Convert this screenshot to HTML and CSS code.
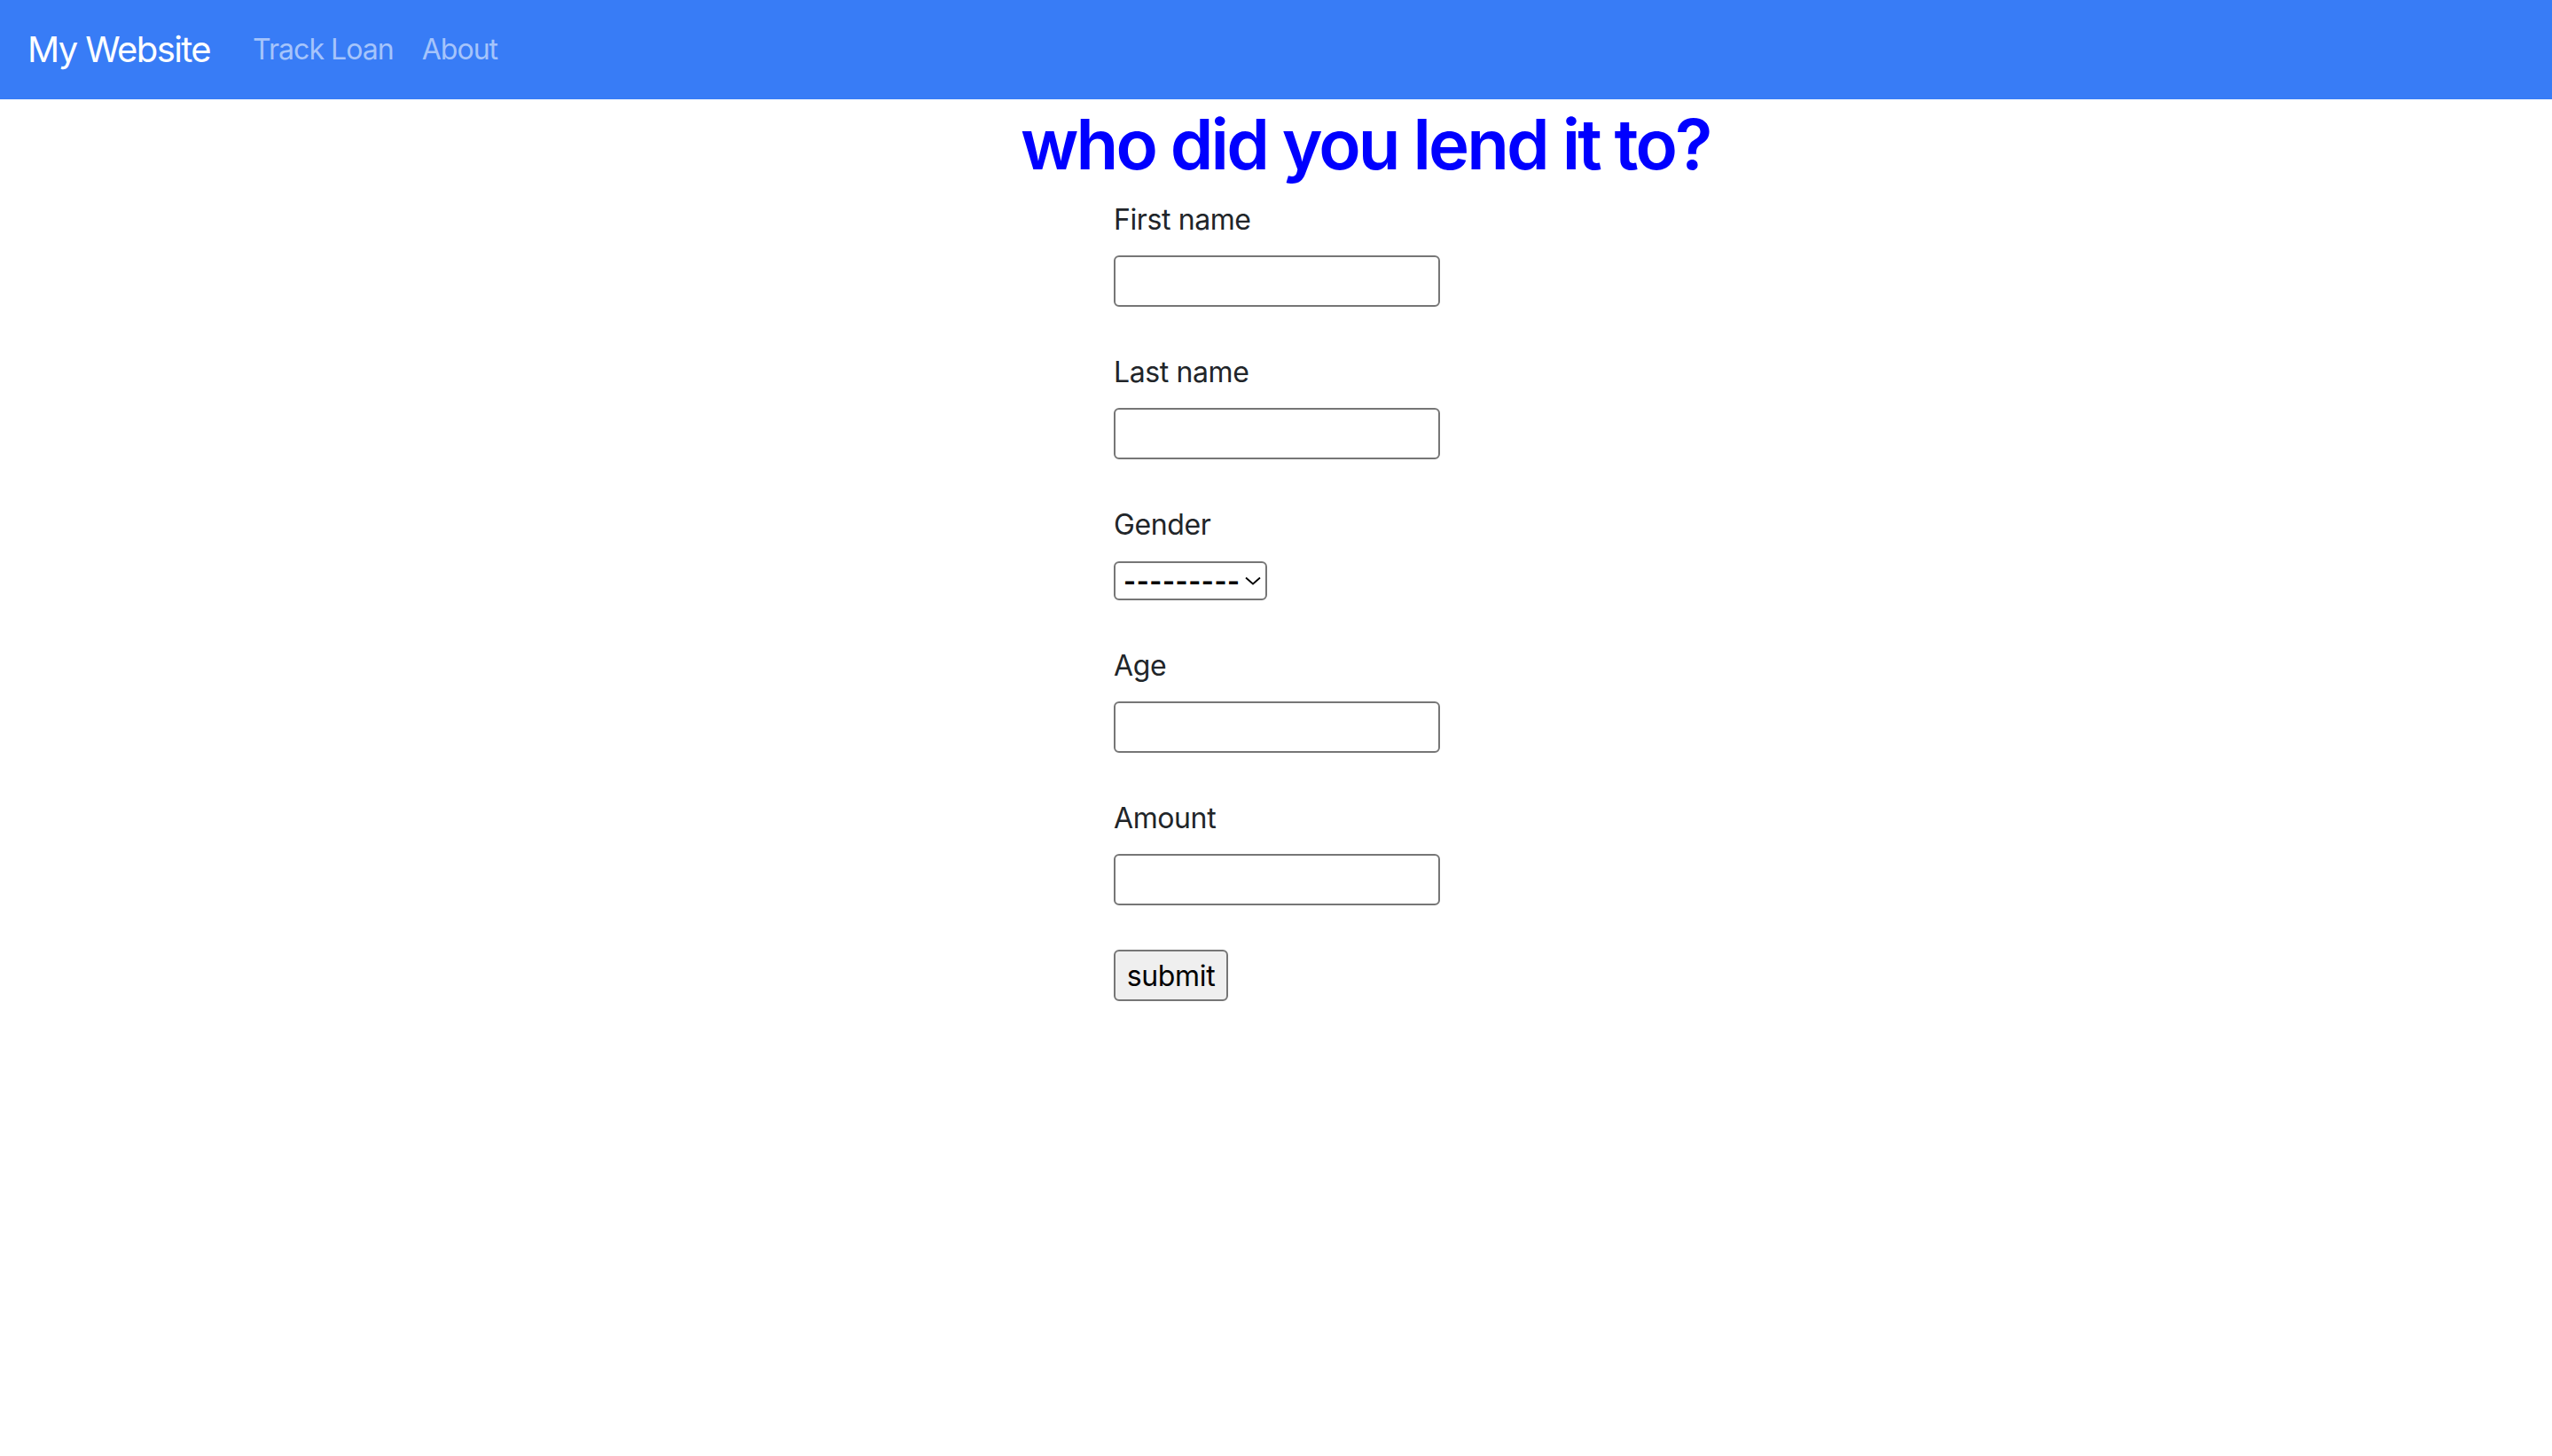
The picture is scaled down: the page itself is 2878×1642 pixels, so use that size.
FILE: index.html
```html
<!DOCTYPE html>
<html lang="en">
<head>
<meta charset="utf-8">
<title>My Website</title>
<link rel="stylesheet" href="styles.css">
</head>
<body>
<nav class="navbar">
  <a class="brand" href="#">My Website</a>
  <ul class="nav-links">
    <li><a class="nav-link" href="#">Track Loan</a></li>
    <li><a class="nav-link" href="#">About</a></li>
  </ul>
</nav>
<main class="page">
  <h1 class="title">who did you lend it to?</h1>
  <form class="loan-form">
    <div class="field">
      <label for="first">First name</label>
      <input id="first" type="text" class="text-input">
    </div>
    <div class="field">
      <label for="last">Last name</label>
      <input id="last" type="text" class="text-input">
    </div>
    <div class="field field-select">
      <label for="gender">Gender</label>
      <div class="select-wrap">
        <select id="gender" class="select-input">
          <option>---------</option>
          <option>Male</option>
          <option>Female</option>
        </select>
        <svg class="chevron" width="18" height="10" viewBox="0 0 18 10"><path d="M1 1.5 L9 8.5 L17 1.5" fill="none" stroke="#000" stroke-width="1.8"/></svg>
      </div>
    </div>
    <div class="field">
      <label for="age">Age</label>
      <input id="age" type="text" class="text-input">
    </div>
    <div class="field">
      <label for="amount">Amount</label>
      <input id="amount" type="text" class="text-input">
    </div>
    <button type="submit" class="submit-btn">submit</button>
  </form>
</main>
</body>
</html>
```
FILE: styles.css
```css
* { box-sizing: border-box; }
html, body { margin: 0; padding: 0; background: #fff; }
body {
  font-family: Inter, "Noto Sans", "Liberation Sans", sans-serif;
  color: #212529;
  letter-spacing: -0.025em;
}
.navbar {
  display: flex;
  align-items: center;
  height: 112px;
  padding-left: 31px;
  background: #387cf6;
}
.brand {
  font-size: 40px;
  line-height: 60px;
  letter-spacing: -0.04em;
  color: #fff;
  text-decoration: none;
  margin-right: 32px;
}
.nav-links {
  display: flex;
  list-style: none;
  margin: 0;
  padding: 0;
}
.nav-link {
  display: block;
  padding: 16px;
  font-size: 32px;
  line-height: 48px;
  letter-spacing: -0.03em;
  color: #a5c4fb;
  text-decoration: none;
}
.page {
  padding-left: 1151px;
}
.title {
  margin: 3px 0 0 0;
  font-family: Inter, "Noto Sans", sans-serif;
  font-weight: 600;
  font-size: 78px;
  line-height: 96px;
  letter-spacing: -0.037em;
  color: #0000ff;
}
.loan-form {
  display: flex;
  flex-direction: column;
  align-items: flex-start;
  margin-top: 13px;
  padding-left: 105px;
}
.field {
  display: flex;
  flex-direction: column;
  align-items: flex-start;
  margin-bottom: 50px;
}
.field label {
  font-size: 32px;
  line-height: 48px;
  margin-bottom: 16px;
}
.field-select label { margin-bottom: 17px; }
.text-input {
  width: 368px;
  height: 58px;
  border: 2px solid #767676;
  border-radius: 6px;
  background: #fff;
  font-size: 26px;
  padding: 2px 6px;
}
.select-wrap {
  position: relative;
  width: 173px;
  height: 44px;
}
.select-input {
  appearance: none;
  -webkit-appearance: none;
  width: 173px;
  height: 44px;
  border: 2px solid #767676;
  border-radius: 6px;
  background: #fff;
  color: #000;
  font-family: Inter, "Noto Sans", sans-serif;
  font-weight: 700;
  font-size: 30px;
  letter-spacing: 0.6px;
  padding: 0 0 0 9px;
}
.chevron {
  position: absolute;
  right: 7px;
  top: 17px;
  pointer-events: none;
}
.submit-btn {
  width: 129px;
  height: 58px;
  border: 2px solid #767676;
  border-radius: 6px;
  background: #efefef;
  color: #000;
  font-family: Inter, "Noto Sans", sans-serif;
  font-size: 32px;
  letter-spacing: -0.01em;
  padding: 0;
}
```
